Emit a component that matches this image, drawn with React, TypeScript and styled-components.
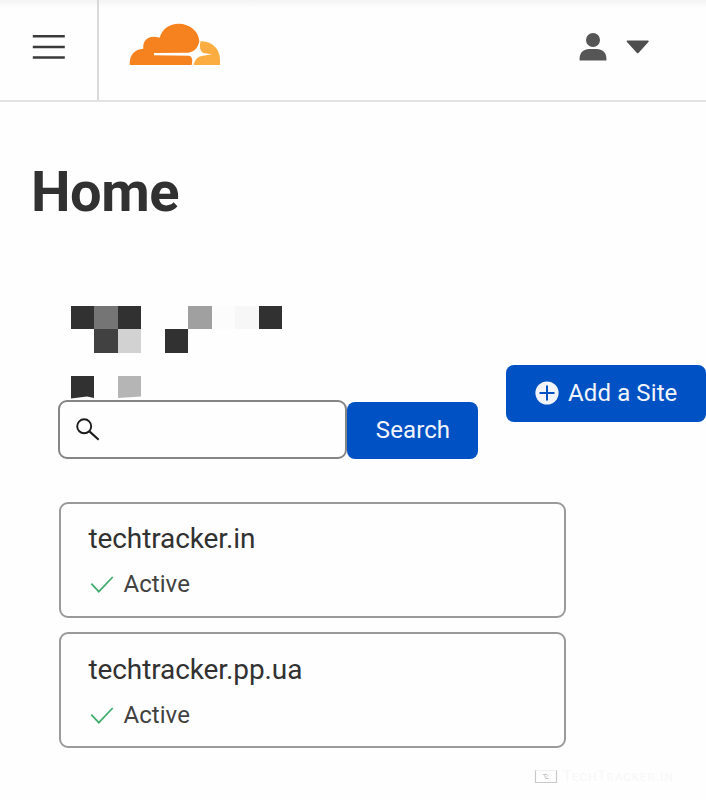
import React from "react";
import styled, { createGlobalStyle } from "styled-components";

const GlobalStyle = createGlobalStyle`
  * { box-sizing: border-box; }
  html, body { margin: 0; padding: 0; background: #fefefe; overflow: hidden; }
  body { font-family: Roboto, "Liberation Sans", sans-serif; color: #313131; }
  button, input { font-family: inherit; }
  svg { display: block; flex: none; }
`;

const Page = styled.div`
  position: relative;
  width: 706px;
  height: 800px;
  overflow: hidden;
  background: #fefefe;
`;

const Header = styled.header`
  display: flex;
  height: 102px;
  border-bottom: 2px solid #e2e2e2;
  background: linear-gradient(#f3f3f3, #fefefe 8px);
`;

const MenuButton = styled.button`
  width: 99px;
  padding: 34px 0 0 32px;
  border: 0;
  border-right: 2px solid #d9d9d9;
  background: none;
  display: flex;
  align-items: flex-start;
`;

const LogoLink = styled.a`
  padding: 22px 0 0 29px;
  flex: 1;
`;

const AccountMenu = styled.div`
  display: flex;
  align-items: flex-start;
  gap: 19px;
  padding: 33px 56px 0 0;
`;

const CaretSlot = styled.span`
  padding-top: 7px;
`;

const Title = styled.h1`
  margin: 57px 0 0 31px;
  font-size: 56px;
  line-height: 66px;
  font-weight: 700;
  letter-spacing: -0.5px;
  color: #313131;
`;

const Toolbar = styled.section`
  display: flex;
  justify-content: space-between;
  align-items: flex-start;
  margin-top: 81px;
  padding-left: 57.5px;
`;

const Mosaic = styled.div`
  display: grid;
  grid-template-columns: 23px 24px 23px 24px 23px 24px 23px 24px 23px;
  grid-template-rows: 23px 24px 23px 24px;
  margin-left: 13.5px;
`;

const Tile = styled.span<{ $col: number; $row: number; $shade: string; $torn?: string }>`
  grid-column: ${(p) => p.$col};
  grid-row: ${(p) => p.$row};
  background: ${(p) => p.$shade};
  clip-path: ${(p) => p.$torn ?? "none"};
`;

const SearchRow = styled.form`
  display: flex;
  align-items: flex-start;
`;

const SearchField = styled.label`
  display: flex;
  width: 289.5px;
  height: 59px;
  padding: 16px 0 0 16.5px;
  border: 2px solid #858585;
  border-radius: 9px;
  background: #fefefe;
`;

const SearchInput = styled.input`
  flex: 1;
  min-width: 0;
  height: 24px;
  border: 0;
  outline: 0;
  background: none;
  font-size: 24px;
`;

const PrimaryButton = styled.button<{ $width: number; $top: number }>`
  display: flex;
  align-items: center;
  justify-content: center;
  gap: 9px;
  width: ${(p) => p.$width}px;
  height: 57px;
  margin-top: ${(p) => p.$top}px;
  padding: 0 0 2px 1px;
  border: 0;
  border-radius: 8px;
  background: #0051c3;
  color: #f1f5fb;
  font-size: 24px;
  letter-spacing: 0.1px;
  white-space: nowrap;
`;

const SiteList = styled.ul`
  list-style: none;
  display: grid;
  gap: 14px;
  width: 507px;
  margin: 43px 0 0 59px;
  padding: 0;
`;

const SiteCard = styled.li`
  height: 116px;
  padding: 18px 0 0 27.5px;
  border: 2px solid #9a9a9a;
  border-radius: 9px;

  & + & {
    padding-top: 19px;
  }
`;

const SiteName = styled.div`
  font-size: 28px;
  line-height: 34px;
  letter-spacing: -0.1px;
  color: #313131;
`;

const Status = styled.div`
  display: flex;
  align-items: center;
  gap: 9.5px;
  margin-top: 13px;
  padding-left: 1.5px;
  font-size: 24px;
  line-height: 30px;
  letter-spacing: 0.05px;
  color: #424242;
`;

const Watermark = styled.div`
  position: absolute;
  left: 534px;
  top: 768px;
  display: flex;
  align-items: center;
  gap: 5px;
  font-size: 14px;
  line-height: 16px;
  font-variant: small-caps;
  letter-spacing: 0.7px;
  color: #f8f8f8;
`;

const MenuIcon = () => (
  <svg width="34" height="26" viewBox="0 0 34 26" stroke="#3a3a3a" strokeWidth="2.5">
    <path d="M.8 2.2h32M.8 13h32M.8 23.6h32" />
  </svg>
);

const CloudLogo = () => (
  <svg width="94" height="45" viewBox="384 66 282 135">
    <path
      fill="#f6821f"
      d="M389 195C388 165 404 147 430 146C427 120 447 104 479 113C486 87 508 71 536 71C570 71 597 95 598 124C594 144 583 156 564 158.5L462 159V166L566 167C576 168 579 179 575 195Z"
    />
    <path
      fill="#fbad41"
      d="M602 124C636 122 660 148 660 178V195H581C584 177 596 168 610 167L636 163L610 159C601 154 597 140 602 124Z"
    />
  </svg>
);

const UserIcon = () => (
  <svg width="28" height="28" viewBox="0 0 28 28" fill="#565656">
    <circle cx="14" cy="7" r="7" />
    <path d="M.6 27.5v-2.3C.6 19.5 5 15.9 10 15.9h8c5 0 9.4 3.6 9.4 9.3v2.3z" />
  </svg>
);

const CaretIcon = () => (
  <svg width="24" height="14" viewBox="0 0 24 14" fill="#4e4e4e">
    <path d="M1.5.5h20.3c1 0 1.2.8.6 1.5l-9.7 10.7c-.6.7-1.4.7-2 0L1 2C.4 1.3.6.5 1.5.5z" />
  </svg>
);

const SearchIcon = () => (
  <svg width="26" height="24" viewBox="0 0 26 24" fill="none" stroke="#1b1b1b">
    <circle cx="8.2" cy="8.3" r="7" strokeWidth="1.9" />
    <path d="M13.4 13.4L22.7 21.7" strokeWidth="2.1" />
  </svg>
);

const PlusIcon = () => (
  <svg width="24" height="24" viewBox="0 0 24 24">
    <circle cx="12" cy="12" r="11.6" fill="#f1f5fb" />
    <path d="M12 4.5v15M4.5 12h15" stroke="#0051c3" strokeWidth="2" />
  </svg>
);

const CheckIcon = () => (
  <svg width="24" height="20" viewBox="0 0 24 20" fill="none" stroke="#43ad70" strokeWidth="1.8">
    <path d="M1.3 9.7L8.8 17.6L22.7 3" />
  </svg>
);

const WatermarkIcon = () => (
  <svg width="24" height="15" viewBox="0 0 24 15" fill="none">
    <path d="M1.5 1v12.5h21V1" stroke="#c9c9c9" strokeWidth="1.2" />
    <path d="M1.5 1.5h21" stroke="#f0f0f0" />
    <path d="M9 5.5h4M10.5 5.5l1 4h3M14.5 6l-2 1.8" stroke="#c6c6c6" />
  </svg>
);

const tiles = [
  { col: 1, row: 1, shade: "#313131" },
  { col: 2, row: 1, shade: "#757575" },
  { col: 3, row: 1, shade: "#313131" },
  { col: 6, row: 1, shade: "#a0a0a0" },
  { col: 7, row: 1, shade: "#fcfcfc" },
  { col: 8, row: 1, shade: "#f7f7f7" },
  { col: 9, row: 1, shade: "#313131" },
  { col: 2, row: 2, shade: "#414141" },
  { col: 3, row: 2, shade: "#d2d2d2" },
  { col: 5, row: 2, shade: "#313131" },
  { col: 1, row: 4, shade: "#313131", torn: "polygon(0 0, 100% 0, 100% 22px, 16px 20.5px, 0 22.5px)" },
  { col: 3, row: 4, shade: "#b5b5b5", torn: "polygon(0 0, 100% 0, 100% 20.5px, 0 22px)" },
];

const sites = ["techtracker.in", "techtracker.pp.ua"];

export default function App() {
  return (
    <Page>
      <GlobalStyle />
      <Header>
        <MenuButton aria-label="Menu">
          <MenuIcon />
        </MenuButton>
        <LogoLink aria-label="Cloudflare">
          <CloudLogo />
        </LogoLink>
        <AccountMenu>
          <UserIcon />
          <CaretSlot>
            <CaretIcon />
          </CaretSlot>
        </AccountMenu>
      </Header>
      <main>
        <Title>Home</Title>
        <Toolbar>
          <div>
            <Mosaic>
              {tiles.map((t) => (
                <Tile key={`${t.col}-${t.row}`} $col={t.col} $row={t.row} $shade={t.shade} $torn={t.torn} />
              ))}
            </Mosaic>
            <SearchRow>
              <SearchField>
                <SearchIcon />
                <SearchInput aria-label="Search sites" />
              </SearchField>
              <PrimaryButton type="button" $width={131} $top={2}>
                Search
              </PrimaryButton>
            </SearchRow>
          </div>
          <PrimaryButton type="button" $width={200.5} $top={59}>
            <PlusIcon />
            Add a Site
          </PrimaryButton>
        </Toolbar>
        <SiteList>
          {sites.map((name) => (
            <SiteCard key={name}>
              <SiteName>{name}</SiteName>
              <Status>
                <CheckIcon />
                Active
              </Status>
            </SiteCard>
          ))}
        </SiteList>
      </main>
      <Watermark>
        <WatermarkIcon />
        TechTracker.in
      </Watermark>
    </Page>
  );
}
